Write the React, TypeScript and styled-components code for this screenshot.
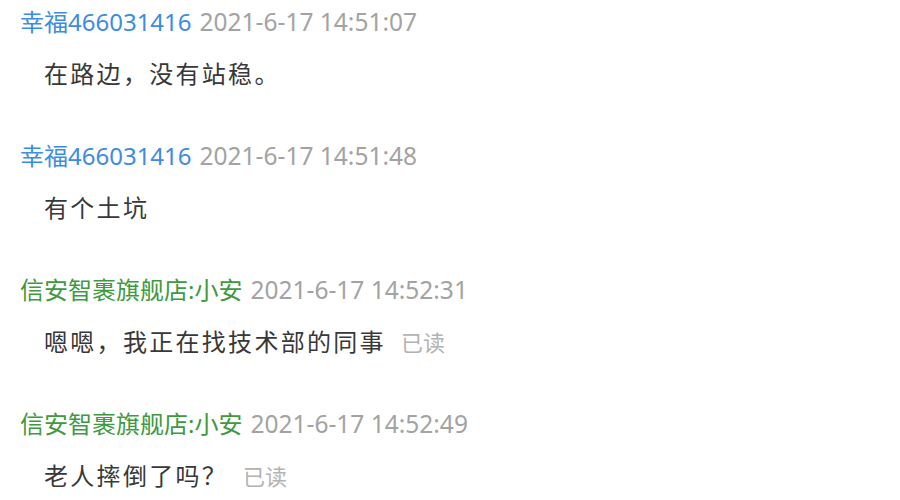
import React from 'react';
import styled, { createGlobalStyle } from 'styled-components';

type Sender = 'customer' | 'staff';

interface ChatMessage {
  name: string;
  time: string;
  text: string;
  sender: Sender;
  read?: boolean;
}

const messages: ChatMessage[] = [
  { name: '幸福466031416', time: '2021-6-17 14:51:07', text: '在路边，没有站稳。', sender: 'customer' },
  { name: '幸福466031416', time: '2021-6-17 14:51:48', text: '有个土坑', sender: 'customer' },
  { name: '信安智裹旗舰店:小安', time: '2021-6-17 14:52:31', text: '嗯嗯，我正在找技术部的同事', sender: 'staff', read: true },
  { name: '信安智裹旗舰店:小安', time: '2021-6-17 14:52:49', text: '老人摔倒了吗？', sender: 'staff', read: true },
];

const GlobalStyle = createGlobalStyle`
  html, body {
    margin: 0;
    padding: 0;
    background: #ffffff;
  }
  body {
    font-family: "Noto Sans", "Noto Sans CJK SC", sans-serif;
  }
`;

const App = () => {
  return (
    <>
      <GlobalStyle />
      <ChatLog>
        {messages.map((m, i) => (
          <Entry key={i}>
            <Header>
              <Name $sender={m.sender}>{m.name}</Name>
              <Time>{m.time}</Time>
            </Header>
            <Body>
              <Text>{m.text}</Text>
              {m.read && <ReadMark>已读</ReadMark>}
            </Body>
          </Entry>
        ))}
      </ChatLog>
    </>
  );
};

export default App;

const ChatLog = styled.div`
  width: 900px;
  height: 500px;
  overflow: hidden;
  padding-left: 20px;
  box-sizing: border-box;
  display: flex;
  flex-direction: column;
`;

const Entry = styled.div`
  display: flex;
  flex-direction: column;
  margin-bottom: 40px;
`;

const Header = styled.div`
  display: flex;
  align-items: baseline;
  height: 44px;
  line-height: 44px;
  white-space: nowrap;
`;

const Name = styled.span<{ $sender: Sender }>`
  font-size: 24px;
  color: ${(p) => (p.$sender === 'staff' ? '#3e9a3e' : '#3c8ce2')};
`;

const Time = styled.span`
  font-size: 24.5px;
  color: #a3a3a3;
  margin-left: 8px;
`;

const Body = styled.div`
  display: flex;
  align-items: baseline;
  margin-top: 10px;
  padding-left: 24px;
  height: 40px;
  line-height: 40px;
  white-space: nowrap;
`;

const Text = styled.span`
  font-size: 24px;
  letter-spacing: 2.3px;
  color: #383838;
`;

const ReadMark = styled.span`
  font-size: 22px;
  color: #b3b3b3;
  margin-left: 15px;
`;
